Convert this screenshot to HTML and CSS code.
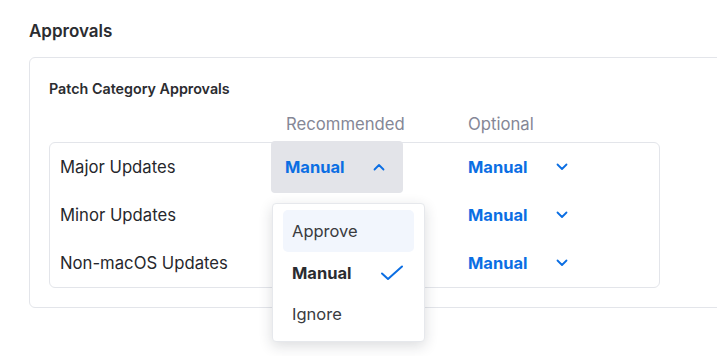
FILE: index.html
```html
<!DOCTYPE html>
<html lang="en">
<head>
    <meta charset="UTF-8">
    <meta name="viewport" content="width=device-width, initial-scale=1.0">
    <title>Approvals</title>
    <link rel="stylesheet" href="styles.css">
</head>
<body>
    <section class="section">
        <h2 class="section-title">Approvals</h2>
        <div class="card">
            <h3 class="card-title">Patch Category Approvals</h3>
            <div class="col-head">
                <span></span>
                <span class="col-label col-rec">Recommended</span>
                <span class="col-label">Optional</span>
            </div>
            <div class="table">
                <div class="row">
                    <span class="row-name">Major Updates</span>
                    <div class="cell">
                        <button class="select open">
                            <span>Manual</span>
                            <svg class="chev" width="12" height="8" viewBox="0 0 12 8"><path d="M1.5 6.5 6 2l4.5 4.5" fill="none" stroke="currentColor" stroke-width="1.8" stroke-linecap="round" stroke-linejoin="round"/></svg>
                        </button>
                        <ul class="menu">
                            <li class="menu-item hover">Approve</li>
                            <li class="menu-item selected">Manual
                                <svg class="check" width="24" height="16" viewBox="0 0 24 16"><path d="M2 8.5 8 14 22 1.5" fill="none" stroke="currentColor" stroke-width="2" stroke-linecap="round" stroke-linejoin="round"/></svg>
                            </li>
                            <li class="menu-item">Ignore</li>
                        </ul>
                    </div>
                    <div class="cell">
                        <button class="select">
                            <span>Manual</span>
                            <svg class="chev" width="12" height="8" viewBox="0 0 12 8"><path d="M1.5 1.5 6 6l4.5-4.5" fill="none" stroke="currentColor" stroke-width="1.8" stroke-linecap="round" stroke-linejoin="round"/></svg>
                        </button>
                    </div>
                </div>
                <div class="row">
                    <span class="row-name">Minor Updates</span>
                    <div class="cell"></div>
                    <div class="cell">
                        <button class="select">
                            <span>Manual</span>
                            <svg class="chev" width="12" height="8" viewBox="0 0 12 8"><path d="M1.5 1.5 6 6l4.5-4.5" fill="none" stroke="currentColor" stroke-width="1.8" stroke-linecap="round" stroke-linejoin="round"/></svg>
                        </button>
                    </div>
                </div>
                <div class="row">
                    <span class="row-name">Non-macOS Updates</span>
                    <div class="cell"></div>
                    <div class="cell">
                        <button class="select">
                            <span>Manual</span>
                            <svg class="chev" width="12" height="8" viewBox="0 0 12 8"><path d="M1.5 1.5 6 6l4.5-4.5" fill="none" stroke="currentColor" stroke-width="1.8" stroke-linecap="round" stroke-linejoin="round"/></svg>
                        </button>
                    </div>
                </div>
            </div>
        </div>
        <h2 class="section-title next">Update Schedule</h2>
    </section>
</body>
</html>
```

FILE: styles.css
```css
html, body {
    margin: 0;
    padding: 0;
    background: #fff;
    overflow: hidden;
}

body {
    font-family: Inter, "Noto Sans", sans-serif;
    color: #26272c;
    width: 717px;
    height: 356px;
}

.section {
    padding: 20px 0 0 29px;
}

.section-title {
    margin: 0;
    font-size: 17px;
    font-weight: 600;
    line-height: 22px;
    color: #2b2c30;
}

.section-title.next {
    margin-top: 47px;
}

.card {
    margin-top: 15px;
    width: 720px;
    height: 251px;
    box-sizing: border-box;
    border: 1px solid #e3e5ea;
    border-radius: 6px;
    padding: 22px 0 0 19px;
}

.card-title {
    margin: 0;
    font-size: 14.3px;
    font-weight: 600;
    line-height: 17px;
    color: #2b2c30;
}

.col-head,
.row {
    display: grid;
    grid-template-columns: 221px 183px 1fr;
}

.col-head {
    margin-top: 16px;
    height: 22px;
    align-items: center;
}

.col-label {
    font-size: 16.7px;
    color: #858796;
    padding-left: 15px;
}

.col-rec {
    padding-left: 16px;
}

.table {
    margin-top: 7px;
    width: 611px;
    box-sizing: border-box;
    border: 1px solid #e3e5ea;
    border-radius: 6px;
}

.row {
    height: 48px;
    align-items: center;
}

.row-name {
    padding-left: 10px;
    font-size: 16.7px;
}

.cell {
    position: relative;
    height: 48px;
    display: flex;
    align-items: center;
}

.select {
    width: 132px;
    height: 52px;
    flex-shrink: 0;
    display: flex;
    align-items: center;
    padding: 0 0 0 14px;
    border: none;
    border-radius: 4px;
    background: transparent;
    font-family: inherit;
    font-size: 16.5px;
    font-weight: 700;
    color: #0b6ee3;
    cursor: pointer;
}

.select.open {
    background: #e3e4e9;
}

.chev {
    margin-left: 28px;
}

.menu {
    position: absolute;
    top: 60px;
    left: 1px;
    z-index: 5;
    width: 153px;
    height: 139px;
    box-sizing: border-box;
    margin: 0;
    padding: 6px 10px;
    list-style: none;
    background: #fff;
    border: 1px solid #e6e8ec;
    border-radius: 4px;
    box-shadow: 0 4px 14px rgba(30, 35, 50, 0.16);
}

.menu-item {
    height: 41px;
    display: flex;
    align-items: center;
    justify-content: space-between;
    padding: 0 9px;
    border-radius: 5px;
    font-size: 16.5px;
    color: #3a3b40;
}

.menu-item.hover {
    height: 42px;
    background: #f2f6fd;
}

.menu-item.selected {
    font-weight: 700;
    color: #2b2c30;
}

.check {
    color: #0b6ee3;
    margin-right: 1px;
}
```
